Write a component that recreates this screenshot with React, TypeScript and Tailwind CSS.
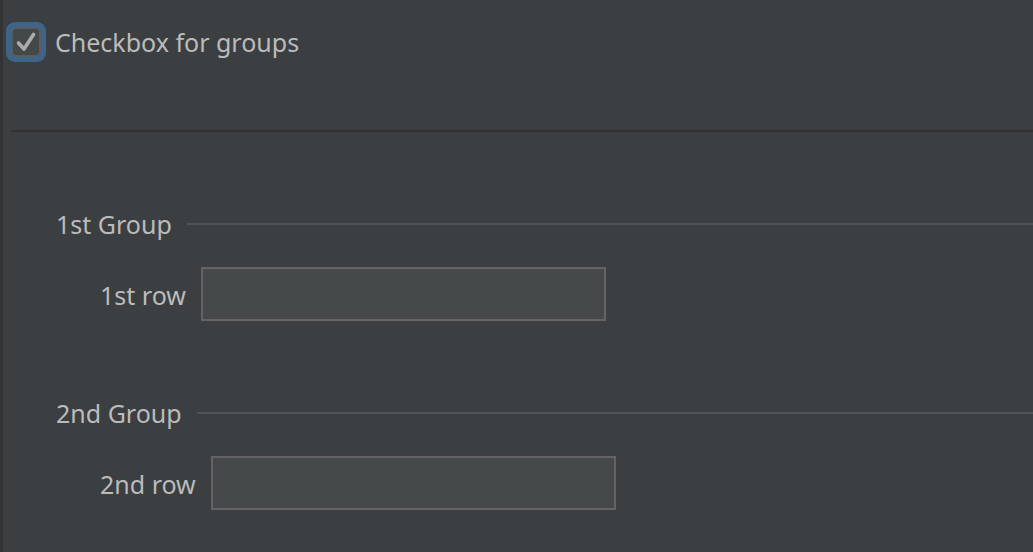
export default function App() {
  const groups = [
    { title: "1st Group", label: "1st row" },
    { title: "2nd Group", label: "2nd row" },
  ];

  return (
    <div
      className="flex h-[552px] w-[1033px] overflow-hidden bg-[#3c3f41] text-[#bbbbbb]"
      style={{ fontFamily: '"Noto Sans", "Open Sans", sans-serif' }}
    >
      {/* left edge */}
      <div className="w-[3px] shrink-0 bg-[#313335]" />

      <div className="flex flex-1 flex-col">
        {/* checkbox row */}
        <label className="mt-[22px] ml-[3px] flex items-center gap-[9px]">
          <span className="flex h-[40px] w-[40px] items-center justify-center rounded-[9px] bg-[#3f6489]">
            <span className="flex h-[30px] w-[30px] items-center justify-center rounded-[5px] border-2 border-[#5a5d5f] bg-[#43494a]">
              <svg width="22" height="22" viewBox="0 0 22 22" fill="none">
                <path
                  d="M3.5 12 L9 18 L18.5 3.5"
                  stroke="#acacac"
                  strokeWidth="3.6"
                  strokeLinecap="round"
                  strokeLinejoin="round"
                />
              </svg>
            </span>
          </span>
          <span className="text-[25px] leading-[34px]">Checkbox for groups</span>
        </label>

        {/* separator */}
        <div className="mt-[68px] ml-[8px] h-[2px] bg-[#2f3133]" />

        {groups.map((g) => (
          <div key={g.title} className="mt-[75px]">
            <div className="flex items-center gap-[15px] pl-[53px]">
              <span className="text-[25px] leading-[34px]">{g.title}</span>
              <div className="-mt-[1px] h-[2px] flex-1 bg-[#515456]" />
            </div>
            <div className="mt-[26px] flex items-center gap-[15px] pl-[97px]">
              <span className="text-[25px] leading-[34px] pt-[2px]">{g.label}</span>
              <div className="h-[54px] w-[405px] border-2 border-[#646464] bg-[#45494a]" />
            </div>
          </div>
        ))}
      </div>
    </div>
  );
}
